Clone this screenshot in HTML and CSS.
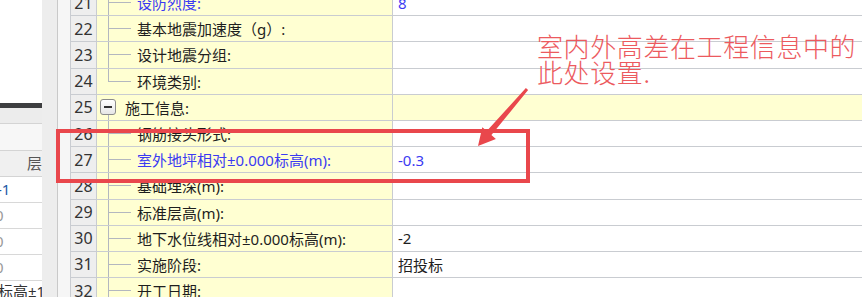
FILE: index.html
```html
<!DOCTYPE html>
<html lang="zh-CN">
<head>
    <meta charset="UTF-8">
    <meta name="viewport" content="width=device-width, initial-scale=1.0">
    <title>工程信息</title>
    <link rel="stylesheet" href="styles.css">
</head>
<body>
    <div class="screen">

        <!-- 左边的楼层表 -->
        <aside class="side">
            <div class="side-blank"></div>
            <div class="side-bar"></div>
            <div class="side-tool"></div>
            <div class="side-band"></div>
            <div class="side-head">层</div>
            <div class="side-row first">-1</div>
            <div class="side-row zero">0</div>
            <div class="side-row zero">0</div>
            <div class="side-row zero">0</div>
            <div class="side-row last">标高±1</div>
        </aside>

        <div class="split"></div>
        <div class="gutter"></div>

        <!-- 工程信息表 -->
        <div class="grid">
            <div class="row">
                <div class="num">21</div>
                <div class="label branch blue">设防烈度:</div>
                <div class="val blue">8</div>
            </div>
            <div class="row">
                <div class="num">22</div>
                <div class="label branch">基本地震加速度（g）:</div>
                <div class="val"></div>
            </div>
            <div class="row">
                <div class="num">23</div>
                <div class="label branch">设计地震分组:</div>
                <div class="val"></div>
            </div>
            <div class="row">
                <div class="num">24</div>
                <div class="label branch end">环境类别:</div>
                <div class="val"></div>
            </div>
            <div class="row group">
                <div class="num">25</div>
                <div class="label head"><span class="fold"></span>施工信息:</div>
                <div class="val"></div>
            </div>
            <div class="row">
                <div class="num">26</div>
                <div class="label branch">钢筋接头形式:</div>
                <div class="val"></div>
            </div>
            <div class="row">
                <div class="num">27</div>
                <div class="label branch blue">室外地坪相对±0.000标高(m):</div>
                <div class="val blue">-0.3</div>
            </div>
            <div class="row">
                <div class="num">28</div>
                <div class="label branch">基础埋深(m):</div>
                <div class="val"></div>
            </div>
            <div class="row">
                <div class="num">29</div>
                <div class="label branch">标准层高(m):</div>
                <div class="val"></div>
            </div>
            <div class="row">
                <div class="num">30</div>
                <div class="label branch">地下水位线相对±0.000标高(m):</div>
                <div class="val">-2</div>
            </div>
            <div class="row">
                <div class="num">31</div>
                <div class="label branch">实施阶段:</div>
                <div class="val">招投标</div>
            </div>
            <div class="row">
                <div class="num">32</div>
                <div class="label branch">开工日期:</div>
                <div class="val"></div>
            </div>
        </div>

        <!-- 标注 -->
        <div class="mark"></div>
        <svg class="arrow" viewBox="0 0 862 297" width="862" height="297">
            <polygon points="528.1,90 491.4,135.1 495.9,139 478,146 482.3,127.2 486.8,131.1 525.9,88" fill="#e9474c"/>
        </svg>
        <p class="note">室内外高差在工程信息中的<br>此处设置.</p>
    </div>
</body>
</html>
```

FILE: styles.css
```css
body {
    margin: 0;
    background-color: #fff;
    font-family: "Noto Sans", "Noto Sans CJK SC", sans-serif;
}
.screen {
    position: relative;
    display: flex;
    width: 862px;
    height: 297px;
    overflow: hidden;
}

/* 左边 */
.side {
    width: 42px;
    flex-shrink: 0;
    overflow: hidden;
    font-size: 15px;
    white-space: nowrap;
}
.side-blank {
    height: 103px;
    background-color: #fff;
}
.side-bar {
    height: 5px;
    background-color: #3d3e40;
}
.side-tool {
    height: 15px;
    background-color: #ececec;
    border-bottom: 1px solid #d4d4d4;
}
.side-band {
    height: 26px;
    background-color: #f7f7f7;
    border-bottom: 1px solid #d4d4d4;
}
.side-head {
    height: 25px;
    line-height: 25px;
    background-color: #f0f0f0;
    border-bottom: 1px solid #d4d4d4;
    color: #555;
    text-indent: 27px;
}
.side-row {
    height: 25px;
    line-height: 25px;
    border-bottom: 1px solid #d8d8d8;
    background-color: #fff;
}
.side-row.first {
    color: #1d5aa6;
    text-indent: -3px;
}
.side-row.zero {
    color: #999;
    text-indent: -5px;
}
.side-row.last {
    color: #333;
    text-indent: -2px;
    line-height: 20px;
}

.split {
    width: 15px;
    flex-shrink: 0;
    background-color: #ededed;
    border-right: 1px solid #c9c9c9;
}
.gutter {
    width: 12px;
    flex-shrink: 0;
    background-color: #f6f6f6;
}

/* 表格 */
.grid {
    flex: 1;
    margin-top: -10px;
    font-size: 15px;
    color: #1e1e1e;
}
.row {
    display: grid;
    grid-template-columns: 27px 296px 1fr;
    height: 26.2px;
    box-sizing: border-box;
    border-bottom: 1px solid #c9ccd1;
}
.num {
    display: flex;
    align-items: center;
    justify-content: center;
    background-color: #eeeeee;
    border-left: 1px solid #c9ccd1;
    border-right: 1px solid #c9ccd1;
    font-size: 16px;
    color: #333;
}
.label {
    display: flex;
    align-items: center;
    padding-left: 40px;
    background-color: #ffffd2;
    border-right: 1px solid #c9ccd1;
    white-space: nowrap;
}
.label.branch {
    background:
        linear-gradient(#b3b7bf, #b3b7bf) 11px 0 / 1px 100% no-repeat,
        linear-gradient(#b3b7bf, #b3b7bf) 11px 50% / 23px 1px no-repeat,
        #ffffd2;
}
.label.branch.end {
    background:
        linear-gradient(#b3b7bf, #b3b7bf) 11px 0 / 1px 50% no-repeat,
        linear-gradient(#b3b7bf, #b3b7bf) 11px 50% / 23px 1px no-repeat,
        #ffffd2;
}
.label.head {
    padding-left: 3px;
    background:
        linear-gradient(#b3b7bf, #b3b7bf) 11px 100% / 1px 5px no-repeat,
        #ffffd2;
}
.fold {
    position: relative;
    width: 14px;
    height: 14px;
    margin-right: 9px;
    border: 1px solid #8c8c8c;
    border-radius: 3px;
    background: linear-gradient(#ffffff, #e6e6e6);
}
.fold::after {
    content: "";
    position: absolute;
    left: 3px;
    top: 6px;
    width: 8px;
    height: 2px;
    background-color: #333;
}
.val {
    display: flex;
    align-items: center;
    padding-left: 5px;
    white-space: nowrap;
}
.row.group .val {
    background-color: #ffffd2;
}
.blue {
    color: #3b3bf2;
}

/* 标注 */
.mark {
    position: absolute;
    left: 56px;
    top: 129px;
    width: 474px;
    height: 54px;
    box-sizing: border-box;
    border: 4px solid #e9474c;
}
.arrow {
    position: absolute;
    left: 0;
    top: 0;
    pointer-events: none;
}
.note {
    position: absolute;
    left: 537px;
    top: 33px;
    margin: 0;
    font-family: "Noto Sans CJK SC", sans-serif;
    font-weight: 300;
    font-size: 26px;
    line-height: 26px;
    letter-spacing: 0.6px;
    color: #ec5a5e;
    white-space: nowrap;
}
```
